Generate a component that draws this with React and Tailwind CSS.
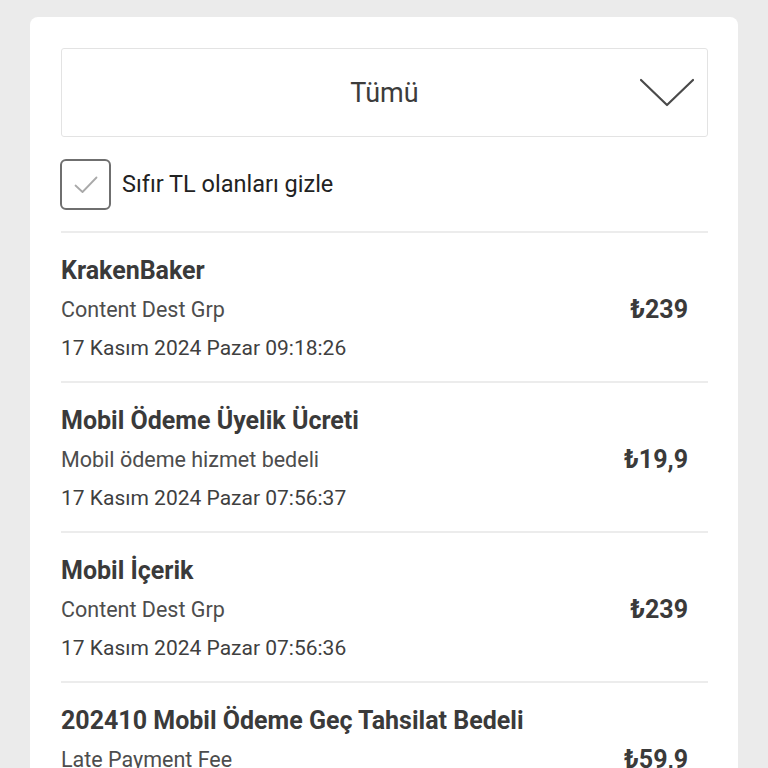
import React, { useState } from 'react';

const items = [
    { id: 1, title: 'KrakenBaker', desc: 'Content Dest Grp', date: '17 Kasım 2024 Pazar 09:18:26', amount: '₺239' },
    { id: 2, title: 'Mobil Ödeme Üyelik Ücreti', desc: 'Mobil ödeme hizmet bedeli', date: '17 Kasım 2024 Pazar 07:56:37', amount: '₺19,9' },
    { id: 3, title: 'Mobil İçerik', desc: 'Content Dest Grp', date: '17 Kasım 2024 Pazar 07:56:36', amount: '₺239' },
    { id: 4, title: '202410 Mobil Ödeme Geç Tahsilat Bedeli', desc: 'Late Payment Fee', date: '17 Kasım 2024 Pazar 07:56:35', amount: '₺59,9' },
];

const Chevron = () => (
    <svg width="54" height="30" viewBox="0 0 54 30" fill="none">
        <path d="M1 2 L27 27 L53 2" stroke="#4a4a4a" strokeWidth="2.2" strokeLinecap="round" strokeLinejoin="round" />
    </svg>
);

const App = () => {
    const [hideZero, setHideZero] = useState(true);

    return (
        <div className="min-h-[768px] bg-[#ebebeb] px-[30px] pt-[17px] font-['Roboto',sans-serif]">
            <div className="bg-white rounded-t-lg px-[30px] pt-[31px] h-[751px] overflow-hidden">
                {/* filtre */}
                <div className="h-[89px] ml-px border border-[#e3e3e3] rounded-[3px] flex items-center relative">
                    <span className="flex-1 text-center text-[27px] text-[#3c3c3c] pt-[2px]">Tümü</span>
                    <div className="absolute right-[13px] top-[29px]"><Chevron /></div>
                </div>

                <label className="flex items-center gap-[11px] mt-[22px] cursor-pointer" onClick={() => setHideZero(!hideZero)}>
                    <span className="w-[51px] h-[51px] border-2 border-[#6f6f6f] rounded-[6px] flex items-center justify-center">
                        {hideZero && (
                            <svg width="24" height="18" viewBox="0 0 24 18" fill="none">
                                <path d="M1.5 9.5 L8.5 16 L22.5 1.5" stroke="#a9a9a9" strokeWidth="1.8" strokeLinecap="round" strokeLinejoin="round" />
                            </svg>
                        )}
                    </span>
                    <span className="text-[23.5px] text-[#222]">Sıfır TL olanları gizle</span>
                </label>

                <div className="mt-[21px] ml-px">
                    {items.map(item => (
                        <div key={item.id} className="border-t-2 border-[#ececec] pt-[18px] pb-[13px] flex items-center">
                            <div className="flex-1">
                                <div className="h-[39px] leading-[39px] text-[25px] font-bold text-[#3a3a3a]">{item.title}</div>
                                <div className="h-[39px] leading-[39px] text-[21.5px] text-[#4d4d4d]">{item.desc}</div>
                                <div className="h-[39px] leading-[39px] text-[21px] text-[#3f3f3f]">{item.date}</div>
                            </div>
                            <div className="pr-[20px] text-[25px] font-bold text-[#3a3a3a]">{item.amount}</div>
                        </div>
                    ))}
                </div>
            </div>
        </div>
    );
};

export default App;
